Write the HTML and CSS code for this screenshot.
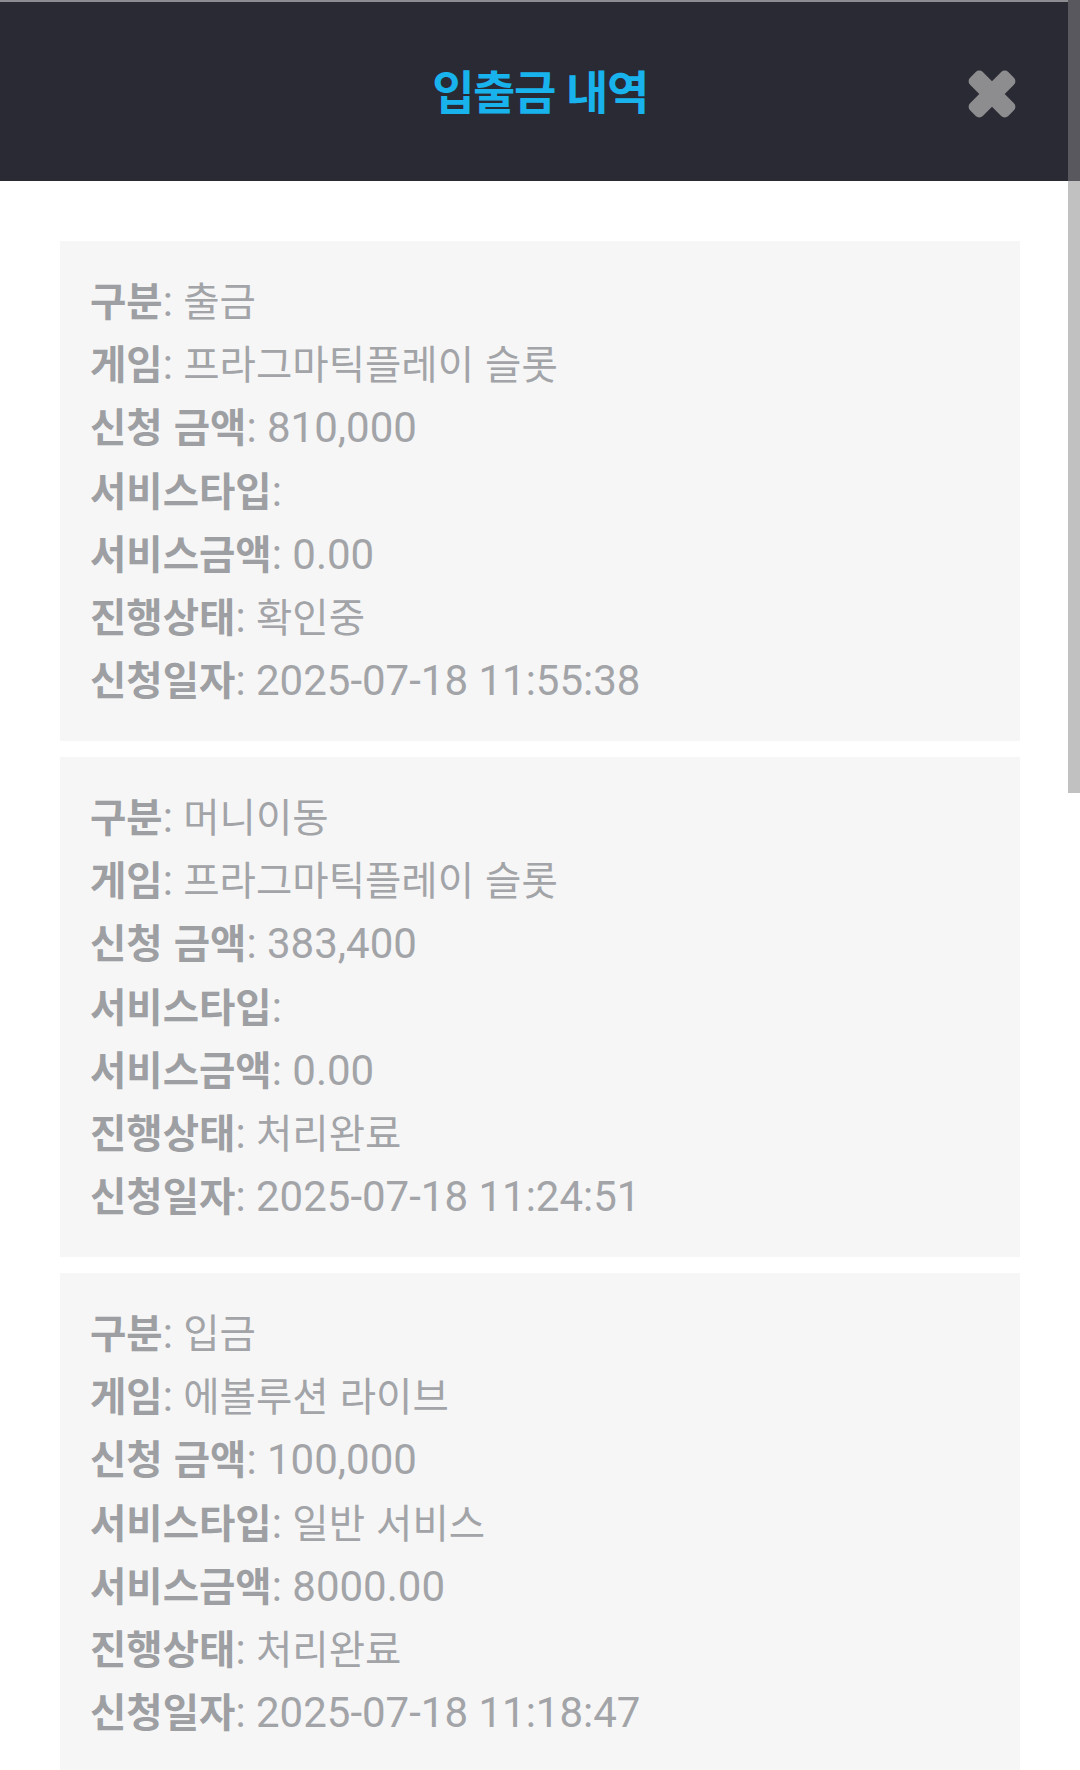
FILE: index.html
```html
<!DOCTYPE html>
<html lang="ko">
<head>
<meta charset="utf-8">
<title>입출금 내역</title>
<link rel="stylesheet" href="styles.css">
</head>
<body>
<div class="app">
  <header class="topbar">
    <div class="spacer"></div>
    <h1 class="title">입출금 내역</h1>
    <button class="close" aria-label="닫기">
      <svg viewBox="0 0 50 50" width="50" height="50">
        <rect x="-2" y="16" width="54" height="18" rx="5" transform="rotate(45 25 25)"/>
        <rect x="-2" y="16" width="54" height="18" rx="5" transform="rotate(-45 25 25)"/>
      </svg>
    </button>
  </header>

  <main class="list">
    <section class="card">
      <p class="row"><b class="lbl">구분</b>: <span class="ko">출금</span></p>
      <p class="row"><b class="lbl">게임</b>: <span class="ko">프라그마틱플레이 슬롯</span></p>
      <p class="row"><b class="lbl">신청 금액</b>: 810,000</p>
      <p class="row"><b class="lbl">서비스타입</b>:</p>
      <p class="row"><b class="lbl">서비스금액</b>: 0.00</p>
      <p class="row"><b class="lbl">진행상태</b>: <span class="ko">확인중</span></p>
      <p class="row"><b class="lbl">신청일자</b>: 2025-07-18 11:55:38</p>
    </section>
    <section class="card">
      <p class="row"><b class="lbl">구분</b>: <span class="ko">머니이동</span></p>
      <p class="row"><b class="lbl">게임</b>: <span class="ko">프라그마틱플레이 슬롯</span></p>
      <p class="row"><b class="lbl">신청 금액</b>: 383,400</p>
      <p class="row"><b class="lbl">서비스타입</b>:</p>
      <p class="row"><b class="lbl">서비스금액</b>: 0.00</p>
      <p class="row"><b class="lbl">진행상태</b>: <span class="ko">처리완료</span></p>
      <p class="row"><b class="lbl">신청일자</b>: 2025-07-18 11:24:51</p>
    </section>
    <section class="card">
      <p class="row"><b class="lbl">구분</b>: <span class="ko">입금</span></p>
      <p class="row"><b class="lbl">게임</b>: <span class="ko">에볼루션 라이브</span></p>
      <p class="row"><b class="lbl">신청 금액</b>: 100,000</p>
      <p class="row"><b class="lbl">서비스타입</b>: <span class="ko">일반 서비스</span></p>
      <p class="row"><b class="lbl">서비스금액</b>: 8000.00</p>
      <p class="row"><b class="lbl">진행상태</b>: <span class="ko">처리완료</span></p>
      <p class="row"><b class="lbl">신청일자</b>: 2025-07-18 11:18:47</p>
    </section>
  </main>

  <div class="scrollbar" aria-hidden="true">
    <div class="sb-top"></div>
    <div class="sb-thumb"></div>
  </div>
</div>
</body>
</html>
```

FILE: styles.css
```css
* { box-sizing: border-box; }

html, body {
  margin: 0;
  padding: 0;
  background: #ffffff;
}

body {
  font-family: Roboto, "Noto Sans CJK KR", sans-serif;
  width: 1080px;
  height: 1770px;
  overflow: hidden;
}

.app {
  position: relative;
  width: 1080px;
  min-height: 1770px;
}

.topbar {
  height: 181px;
  background: #2a2a34;
  border-top: 2px solid #8c8c92;
  display: grid;
  grid-template-columns: 1fr auto 1fr;
  align-items: center;
}

.title {
  margin: 0;
  padding-bottom: 6px;
  font-family: "Noto Sans CJK KR", sans-serif;
  font-weight: 700;
  font-size: 46px;
  letter-spacing: -1.5px;
  color: #18b2ec;
  line-height: 1;
}

.close {
  justify-self: end;
  margin-right: 63px;
  margin-top: 4px;
  width: 50px;
  height: 50px;
  padding: 0;
  border: 0;
  background: transparent;
  display: flex;
}

.close svg { fill: #8d8d8f; }

.list {
  padding: 60px 60px 0 60px;
  display: flex;
  flex-direction: column;
  gap: 16px;
}

.card {
  background: #f6f6f6;
  padding: 26px 30px 31px 30px;
  height: 500px;
}

.row {
  margin: 0;
  height: 63.2px;
  line-height: 63.2px;
  font-size: 42px;
  color: #a2a4a8;
  white-space: nowrap;
}

.lbl {
  font-family: "Noto Sans CJK KR", sans-serif;
  font-weight: 700;
  font-size: 39.5px;
  color: #9d9fa3;
}

.ko {
  font-family: "Noto Sans CJK KR", sans-serif;
  font-weight: 400;
  font-size: 39.5px;
}

.scrollbar {
  position: absolute;
  top: 0;
  right: 0;
  bottom: 0;
  width: 12px;
  display: flex;
  flex-direction: column;
  background: #ffffff;
}

.sb-top {
  height: 181px;
  background: #58585e;
}

.sb-thumb {
  height: 612px;
  background: #c1c1c1;
}
```
